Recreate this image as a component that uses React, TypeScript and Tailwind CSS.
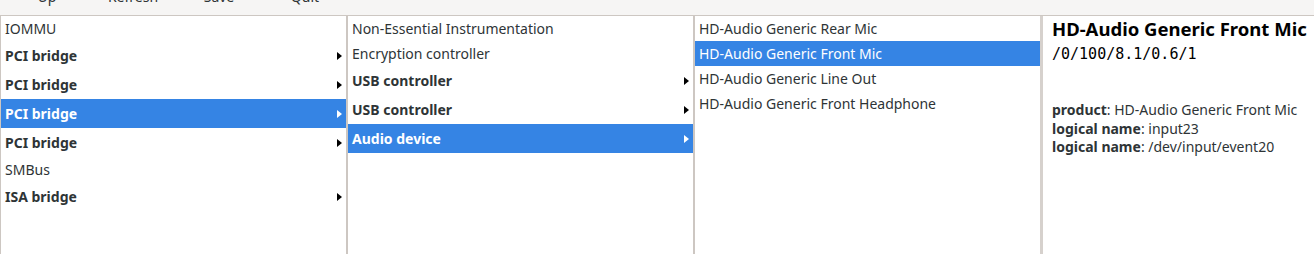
import React from "react";

type Row = { label: string; bold?: boolean; arrow?: boolean; selected?: boolean };

const col1: Row[] = [
  { label: "IOMMU" },
  { label: "PCI bridge", bold: true, arrow: true },
  { label: "PCI bridge", bold: true, arrow: true },
  { label: "PCI bridge", bold: true, arrow: true, selected: true },
  { label: "PCI bridge", bold: true, arrow: true },
  { label: "SMBus" },
  { label: "ISA bridge", bold: true, arrow: true },
];

const col2: Row[] = [
  { label: "Non-Essential Instrumentation" },
  { label: "Encryption controller" },
  { label: "USB controller", bold: true, arrow: true },
  { label: "USB controller", bold: true, arrow: true },
  { label: "Audio device", bold: true, arrow: true, selected: true },
];

const col3: Row[] = [
  { label: "HD-Audio Generic Rear Mic" },
  { label: "HD-Audio Generic Front Mic", selected: true },
  { label: "HD-Audio Generic Line Out" },
  { label: "HD-Audio Generic Front Headphone" },
];

function Arrow({ white }: { white?: boolean }) {
  return (
    <svg width="5" height="8" viewBox="0 0 5 8" className="shrink-0">
      <polygon points="0,0 5,4 0,8" fill={white ? "#ffffff" : "#000000"} />
    </svg>
  );
}

function Column({ rows }: { rows: Row[] }) {
  return (
    <div className="w-[345px] shrink-0 flex flex-col bg-white">
      {rows.map((r, i) => (
        <div
          key={i}
          className={
            "flex items-center justify-between pl-[4px] pr-[4px] " +
            (r.bold ? "h-[29px] font-bold " : "h-[25px] ") +
            (r.selected ? "bg-[#3584e4] text-white" : "text-[#2e3436]")
          }
        >
          <span className="whitespace-nowrap">{r.label}</span>
          {r.arrow && <Arrow white={r.selected} />}
        </div>
      ))}
    </div>
  );
}

export default function App() {
  const tools = ["Up", "Refresh", "Save", "Quit"];
  return (
    <div className="w-[1314px] h-[254px] bg-white flex flex-col overflow-hidden font-['Noto_Sans',sans-serif] text-[14px] leading-[20px]">
      <div className="h-[16px] shrink-0 bg-[#f6f5f4] border-b border-[#cdc7c2] overflow-hidden flex pl-[4px]">
        {tools.map((t) => (
          <div key={t} className="w-[86px] shrink-0 flex justify-center mt-[-13px] text-[#2e3436]">
            {t}
          </div>
        ))}
      </div>
      <div className="flex-1 flex border-l border-[#cdc7c2]">
        <Column rows={col1} />
        <div className="w-[2px] shrink-0 bg-[#cdc7c2]" />
        <Column rows={col2} />
        <div className="w-[2px] shrink-0 bg-[#cdc7c2]" />
        <Column rows={col3} />
        <div className="w-[3px] shrink-0 bg-[#d6d1cd]" />
        <div className="flex-1 pl-[9px] pt-[1px] text-[#2e3436] overflow-hidden">
          <div className="text-[18.5px] leading-[24px] font-bold whitespace-nowrap text-black">
            HD-Audio Generic Front Mic
          </div>
          <div className="mt-[3px] font-['DejaVu_Sans_Mono',monospace] text-[15px] leading-[20px] text-black">
            /0/100/8.1/0.6/1
          </div>
          <div className="mt-[37px] leading-[18.5px] whitespace-nowrap">
            <div>
              <span className="font-bold">product</span>: HD-Audio Generic Front Mic
            </div>
            <div>
              <span className="font-bold">logical name</span>: input23
            </div>
            <div>
              <span className="font-bold">logical name</span>: /dev/input/event20
            </div>
          </div>
        </div>
      </div>
    </div>
  );
}
